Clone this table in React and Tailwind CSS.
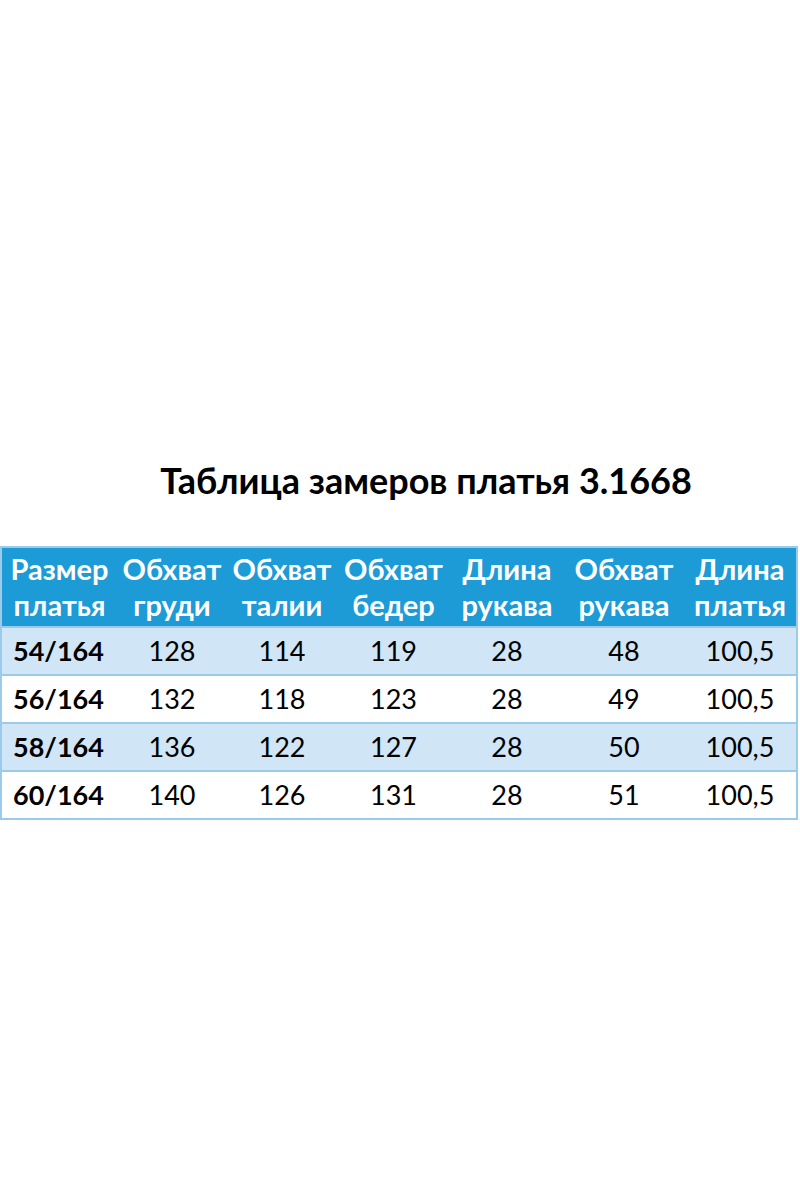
import React from 'react';

const HEAD = [
  ['Размер', 'платья'],
  ['Обхват', 'груди'],
  ['Обхват', 'талии'],
  ['Обхват', 'бедер'],
  ['Длина', 'рукава'],
  ['Обхват', 'рукава'],
  ['Длина', 'платья'],
];

const ROWS = [
  ['54/164', '128', '114', '119', '28', '48', '100,5'],
  ['56/164', '132', '118', '123', '28', '49', '100,5'],
  ['58/164', '136', '122', '127', '28', '50', '100,5'],
  ['60/164', '140', '126', '131', '28', '51', '100,5'],
];

const COLS = 'grid grid-cols-[115px_110px_110px_113px_114px_120px_1fr]';

const App = () => {
  return (
    <div className="w-[800px] h-[1200px] bg-white text-black" style={{ fontFamily: 'Lato, "Open Sans", sans-serif' }}>
      <div className="pt-[455px] h-[546px] pl-[52px] text-center">
        <h1 className="text-[36px] font-bold leading-[50px]">Таблица замеров платья 3.1668</h1>
      </div>
      <div className="w-[798px] border-2 border-[#9ccbea]">
        <div className={`${COLS} bg-[#1d9bd7] text-white font-bold text-[29px] leading-[36px] h-[78px] items-center`}>
          {HEAD.map((h, i) => (
            <div key={i} className="text-center whitespace-nowrap">
              <div>{h[0]}</div>
              <div>{h[1]}</div>
            </div>
          ))}
        </div>
        {ROWS.map((r, i) => (
          <div
            key={i}
            className={`${COLS} h-[48px] items-center border-t-2 border-[#9ccbea] text-[27px] ${i % 2 === 0 ? 'bg-[#d0e6f6]' : 'bg-white'}`}
          >
            {r.map((c, j) => (
              <div key={j} className={j === 0 ? 'font-bold pl-[11px]' : 'text-center'}>
                {c}
              </div>
            ))}
          </div>
        ))}
      </div>
    </div>
  );
};

export default App;
